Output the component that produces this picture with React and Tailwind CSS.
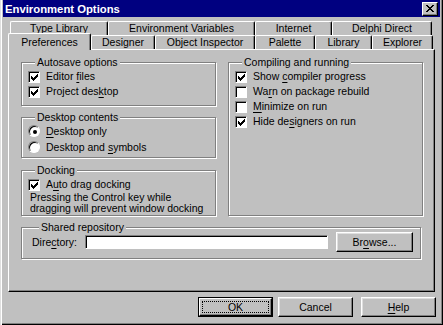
import React from "react";

const CHECK = ["......X", ".....XX", "X...XXX", "XX.XXX.", "XXXXX..", ".XXX...", "..X...."];

function CheckMark() {
  const rects = [];
  CHECK.forEach((row, y) =>
    row.split("").forEach((c, x) => {
      if (c === "X") rects.push(<rect key={`${x}-${y}`} x={x} y={y} width="1" height="1" />);
    })
  );
  return (
    <svg width="7" height="7" viewBox="0 0 7 7" shapeRendering="crispEdges" fill="#000">
      {rects}
    </svg>
  );
}

function Check({ checked }) {
  return (
    <span className="inline-flex w-[12px] h-[12px] shrink-0 items-center justify-center bg-white border border-t-[#808080] border-l-[#808080] border-b-white border-r-white shadow-[inset_1px_1px_0_#000]">
      <span className="ml-[1px] mt-[1px] flex">{checked && <CheckMark />}</span>
    </span>
  );
}

function Radio({ checked }) {
  return (
    <span className="inline-flex w-[12px] h-[12px] shrink-0 items-center justify-center rounded-full bg-white border border-t-[#808080] border-l-[#808080] border-b-white border-r-white shadow-[inset_1px_1px_0_#000]">
      {checked && <span className="w-[4px] h-[4px] rounded-full bg-black ml-[1px] mt-[1px]" />}
    </span>
  );
}

function CheckRow({ checked, children }) {
  return (
    <div className="flex items-center h-[15px] gap-[6px]">
      <Check checked={checked} />
      <span className="leading-[13px]">{children}</span>
    </div>
  );
}

function RadioRow({ checked, children }) {
  return (
    <div className="flex items-center h-[16px] gap-[6px]">
      <Radio checked={checked} />
      <span className="leading-[13px]">{children}</span>
    </div>
  );
}

function Group({ title, className, children }) {
  return (
    <div className={`border border-[#808080] shadow-[inset_1px_1px_0_#fff,1px_1px_0_#fff] ${className}`}>
      <div className="-mt-[7px] ml-[7px] px-[2px] w-fit bg-[#c0c0c0] leading-[13px]">{title}</div>
      {children}
    </div>
  );
}

function U({ children }) {
  return <span className="underline underline-offset-[2px]">{children}</span>;
}

function Tab({ w, top, children }) {
  return (
    <div
      className={`${w} h-[14px] ${top ? "pb-[1px]" : ""} flex items-center justify-center leading-[13px] border-t border-l border-r border-t-white border-l-white border-r-black rounded-t-[2px] shadow-[inset_-1px_0_0_#808080]`}
    >
      {children}
    </div>
  );
}

function Button({ className, children }) {
  return (
    <div
      className={`${className} h-[20px] flex items-center justify-center bg-[#c0c0c0] border border-t-white border-l-white border-b-black border-r-black shadow-[inset_-1px_-1px_0_#808080,inset_1px_1px_0_#dfdfdf] leading-[13px]`}
    >
      {children}
    </div>
  );
}

export default function App() {
  return (
    <div className="w-[443px] h-[325px] bg-[#c0c0c0] font-['Liberation_Sans',Arial,sans-serif] text-[10.5px] text-black flex flex-col shadow-[inset_1px_0_0_#dfdfdf,inset_2px_0_0_#fff,inset_-1px_-1px_0_#000,inset_-2px_-2px_0_#808080] overflow-hidden">
      {/* Title bar */}
      <div className="mx-[3px] h-[17px] bg-[#000080] flex items-center justify-between pl-[2px] pr-[2px]">
        <span className="text-white font-bold text-[11.3px] leading-[14px]">Environment Options</span>
        <span className="w-[16px] h-[14px] flex items-center justify-center bg-[#c0c0c0] border border-t-white border-l-white border-b-black border-r-black shadow-[inset_-1px_-1px_0_#808080]">
          <svg width="8" height="7" viewBox="0 0 8 7" shapeRendering="crispEdges">
            <path d="M0 0h2v1h-2zM6 0h2v1h-2zM1 1h2v1h-2zM5 1h2v1h-2zM2 2h4v1h-4zM3 3h2v1h-2zM2 4h4v1h-4zM1 5h2v1h-2zM5 5h2v1h-2zM0 6h2v1h-2zM6 6h2v1h-2z" fill="#000" />
          </svg>
        </span>
      </div>

      {/* Tab rows */}
      <div className="mt-[4px] pl-[10px] flex">
        <Tab top w="w-[98px]">Type Library</Tab>
        <Tab top w="w-[147px]">Environment Variables</Tab>
        <Tab top w="w-[77px]">Internet</Tab>
        <Tab top w="w-[100px]">Delphi Direct</Tab>
      </div>
      <div className="pl-[8px] flex items-end h-[14px]">
        <div className="relative z-10 w-[83px] h-[17px] -mb-[1px] flex items-center justify-center leading-[13px] bg-[#c0c0c0] border-t border-l border-r border-t-white border-l-white border-r-black rounded-t-[2px] shadow-[inset_-1px_0_0_#808080]">
          Preferences
        </div>
        <Tab w="w-[64px]">Designer</Tab>
        <Tab w="w-[100px]">Object Inspector</Tab>
        <Tab w="w-[60px]">Palette</Tab>
        <Tab w="w-[57px]">Library</Tab>
        <Tab w="w-[61px]">Explorer</Tab>
      </div>

      {/* Page */}
      <div className="ml-[8px] w-[427px] h-[243px] border border-t-white border-l-white border-r-black border-b-black shadow-[inset_-1px_-1px_0_#808080] pl-[12px] pt-[12px] flex flex-col">
        <div className="flex gap-[12px]">
          <div className="w-[195px] flex flex-col">
            <Group title="Autosave options" className="h-[44px] pl-[6px]">
              <CheckRow checked>
                Editor <U>f</U>iles
              </CheckRow>
              <CheckRow checked>
                Project des<U>k</U>top
              </CheckRow>
            </Group>
            <Group title="Desktop contents" className="mt-[11px] h-[41px] pl-[6px]">
              <div className="-mt-[1px]">
                <RadioRow checked>
                  <U>D</U>esktop only
                </RadioRow>
                <RadioRow>
                  Desktop and <U>s</U>ymbols
                </RadioRow>
              </div>
            </Group>
            <Group title="Docking" className="mt-[12px] h-[46px] pl-[6px]">
              <CheckRow checked>
                A<U>u</U>to drag docking
              </CheckRow>
              <div className="pl-[2px] leading-[11px]">
                Pressing the Control key while
                <br />
                dragging will prevent window docking
              </div>
            </Group>
          </div>
          <Group title="Compiling and running" className="w-[195px] h-[154px] pl-[6px]">
            <CheckRow checked>
              Show <U>c</U>ompiler progress
            </CheckRow>
            <CheckRow>
              Wa<U>r</U>n on package rebuild
            </CheckRow>
            <CheckRow>
              <U>M</U>inimize on run
            </CheckRow>
            <CheckRow checked>
              Hide de<U>s</U>igners on run
            </CheckRow>
          </Group>
        </div>
        <Group title="Shared repository" className="mt-[11px] w-[400px] h-[32px] pl-[10px]">
          <div className="-mt-[1px] h-[18px] flex items-center">
            <span className="w-[53px] leading-[13px]">
              Dire<U>c</U>tory:
            </span>
            <span className="w-[243px] h-[14px] bg-white border border-t-[#808080] border-l-[#808080] border-b-white border-r-white shadow-[inset_1px_1px_0_#000]" />
            <Button className="ml-[8px] w-[77px] h-[18px]">
              Br<U>o</U>wse...
            </Button>
          </div>
        </Group>
      </div>

      {/* Buttons */}
      <div className="mt-[5px] flex justify-end pr-[7px]">
        <div className="w-[75px] h-[20px] border border-black flex">
          <div className="flex-1 flex bg-[#c0c0c0] border border-t-white border-l-white border-b-black border-r-black shadow-[inset_-1px_-1px_0_#808080]">
            <div className="flex-1 m-[2px] border border-dotted border-black flex items-center justify-center leading-[12px]">
              OK
            </div>
          </div>
        </div>
        <Button className="ml-[5px] w-[75px]">Cancel</Button>
        <Button className="ml-[8px] w-[75px]">
          <U>H</U>elp
        </Button>
      </div>
    </div>
  );
}
